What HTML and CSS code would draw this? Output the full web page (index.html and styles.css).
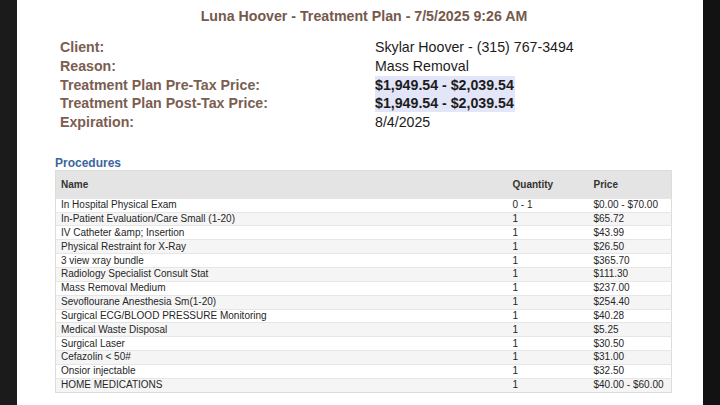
FILE: index.html
```html
<!DOCTYPE html>
<html lang="en">
<head>
  <meta charset="UTF-8">
  <title>Treatment Plan</title>
  <link rel="stylesheet" href="styles.css">
</head>
<body>
  <div class="edge"></div>
  <div class="page">
    <h1 class="title">Luna Hoover - Treatment Plan - 7/5/2025 9:26 AM</h1>

    <div class="info">
      <div class="label">Client:</div>
      <div class="value">Skylar Hoover - (315) 767-3494</div>
      <div class="label">Reason:</div>
      <div class="value">Mass Removal</div>
      <div class="label">Treatment Plan Pre-Tax Price:</div>
      <div class="value"><span class="price">$1,949.54 - $2,039.54</span></div>
      <div class="label">Treatment Plan Post-Tax Price:</div>
      <div class="value"><span class="price">$1,949.54 - $2,039.54</span></div>
      <div class="label">Expiration:</div>
      <div class="value">8/4/2025</div>
    </div>

    <h2 class="section">Procedures</h2>
    <table class="procs">
      <thead>
        <tr><th class="c-name">Name</th><th class="c-qty">Quantity</th><th class="c-price">Price</th></tr>
      </thead>
      <tbody>
        <tr><td>In Hospital Physical Exam</td><td>0 - 1</td><td>$0.00 - $70.00</td></tr>
        <tr><td>In-Patient Evaluation/Care Small (1-20)</td><td>1</td><td>$65.72</td></tr>
        <tr><td>IV Catheter &amp;amp; Insertion</td><td>1</td><td>$43.99</td></tr>
        <tr><td>Physical Restraint for X-Ray</td><td>1</td><td>$26.50</td></tr>
        <tr><td>3 view xray bundle</td><td>1</td><td>$365.70</td></tr>
        <tr><td>Radiology Specialist Consult Stat</td><td>1</td><td>$111.30</td></tr>
        <tr><td>Mass Removal Medium</td><td>1</td><td>$237.00</td></tr>
        <tr><td>Sevoflourane Anesthesia Sm(1-20)</td><td>1</td><td>$254.40</td></tr>
        <tr><td>Surgical ECG/BLOOD PRESSURE Monitoring</td><td>1</td><td>$40.28</td></tr>
        <tr><td>Medical Waste Disposal</td><td>1</td><td>$5.25</td></tr>
        <tr><td>Surgical Laser</td><td>1</td><td>$30.50</td></tr>
        <tr><td>Cefazolin &lt; 50#</td><td>1</td><td>$31.00</td></tr>
        <tr><td>Onsior injectable</td><td>1</td><td>$32.50</td></tr>
        <tr><td>HOME MEDICATIONS</td><td>1</td><td>$40.00 - $60.00</td></tr>
      </tbody>
    </table>
  </div>
  <div class="edge edge-right"></div>
</body>
</html>
```

FILE: styles.css
```css
* { margin: 0; padding: 0; box-sizing: border-box; }
html, body { height: 100%; }
body { display: flex; background: #fff; font-family: "Liberation Sans", Arial, sans-serif; color: #1c1c1c; overflow: hidden; }
.edge { width: 17px; flex-shrink: 0; background: #1b1b1b; }
.edge-right { background: #121212; }
.page { flex: 1; background: #fff; padding-top: 7px; }
.title { text-align: center; font-size: 14.2px; font-weight: 700; color: #76594d; line-height: 18px; margin-left: 8px; }
.info { display: grid; grid-template-columns: 315px 1fr; margin: 13px 0 0 43px; font-size: 14.2px; line-height: 18.75px; }
.label { font-weight: 700; color: #7a5e52; }
.value { color: #1c1c1c; }
.price { font-weight: 700; background: #e3e5f8; padding: 1px 1px 1px 0; }
.section { font-size: 12px; font-weight: 700; color: #3c66a0; margin: 25px 0 0 38px; line-height: 13px; }
.procs { margin-left: 38px; width: 617px; border-collapse: collapse; font-size: 10px; border: 1px solid #dcdcdc; }
.procs th { background: #e4e4e4; text-align: left; font-weight: 700; color: #333; height: 28px; padding: 0 5px; }
.procs td { height: 13.85px; padding: 0 5px; line-height: 12px; border-top: 1px solid #e6e6e6; color: #262626; }
.procs tbody tr:nth-child(even) td { background: #f5f5f5; }
.c-name { width: 452px; }
.c-qty { width: 81px; }
```
